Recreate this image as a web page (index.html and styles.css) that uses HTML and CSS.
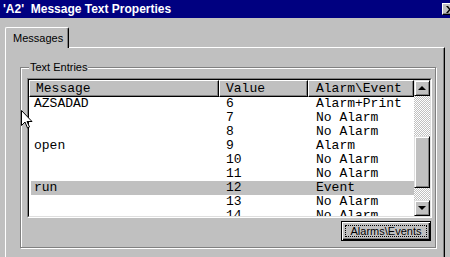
FILE: index.html
```html
<!DOCTYPE html>
<html lang="en">
<head>
    <meta charset="UTF-8">
    <title>'A2' Message Text Properties</title>
    <link rel="stylesheet" href="styles.css">
</head>
<body>
    <div class="titlebar">
        <span class="title">'A2'&nbsp; Message Text Properties</span>
        <span class="close">
            <svg width="8" height="7" viewBox="0 0 8 7"><path d="M0 0h2l2 2.5L6 0h2L5 3.5 8 7H6L4 4.5 2 7H0l3-3.5z" fill="#000"/></svg>
        </span>
    </div>

    <div class="tabs">
        <div class="tab">Messages</div>
    </div>

    <div class="panel">
        <div class="group">
            <span class="group-label">Text Entries</span>

            <div class="list">
                <div class="list-inner">
                    <div class="rows-area">
                        <div class="header">
                            <div class="hcell">Message</div>
                            <div class="hcell">Value</div>
                            <div class="hcell">Alarm\Event</div>
                        </div>
                        <div class="row"><span>AZSADAD</span><span>6</span><span>Alarm+Print</span></div>
                        <div class="row"><span></span><span>7</span><span>No Alarm</span></div>
                        <div class="row"><span></span><span>8</span><span>No Alarm</span></div>
                        <div class="row"><span>open</span><span>9</span><span>Alarm</span></div>
                        <div class="row"><span></span><span>10</span><span>No Alarm</span></div>
                        <div class="row"><span></span><span>11</span><span>No Alarm</span></div>
                        <div class="row selected"><span>run</span><span>12</span><span>Event</span></div>
                        <div class="row"><span></span><span>13</span><span>No Alarm</span></div>
                        <div class="row"><span></span><span>14</span><span>No Alarm</span></div>
                    </div>
                    <div class="scrollbar">
                        <div class="sb-btn"><span class="arrow-up"></span></div>
                        <div class="sb-track"><div class="sb-thumb"></div></div>
                        <div class="sb-btn"><span class="arrow-down"></span></div>
                    </div>
                </div>
            </div>

            <div class="btn-row">
                <button class="btn default"><span class="focus">Alarms\Events</span></button>
            </div>
        </div>
    </div>

    <!-- mouse pointer -->
    <svg class="cursor" width="13" height="20" viewBox="0 0 13 20">
        <path d="M0.5 0.5v15l3.5-3.5 2.5 6 2-1-2.5-5.5h5z" fill="#fff" stroke="#000" stroke-width="1"/>
    </svg>
</body>
</html>
```

FILE: styles.css
```css
body {
    margin: 0;
    width: 450px;
    height: 257px;
    overflow: hidden;
    position: relative;
    background: #c0c0c0;
    font-family: "Liberation Sans", Arial, sans-serif;
    font-size: 11px;
    color: #000;
}
.titlebar {
    height: 18px;
    background: #000080;
    color: #fff;
    display: flex;
    align-items: center;
    justify-content: space-between;
    padding-left: 3px;
    font-size: 12px;
    font-weight: bold;
}
.close {
    flex: none;
    width: 16px;
    height: 12px;
    margin-right: -8px;
    box-sizing: border-box;
    background: #c0c0c0;
    border-top: 1px solid #fff;
    border-left: 1px solid #fff;
    border-right: 1px solid #000;
    border-bottom: 1px solid #000;
    box-shadow: inset -1px -1px #808080;
    display: flex;
    align-items: center;
    padding-left: 3px;
}
.tabs {
    padding: 9px 0 0 5px;
    display: flex;
}
.tab {
    position: relative;
    z-index: 1;
    width: 64px;
    height: 21px;
    box-sizing: border-box;
    margin-bottom: -1px;
    padding: 4px 0 0 7px;
    background: #c0c0c0;
    border-top: 1px solid #fff;
    border-left: 1px solid #fff;
    border-right: 1px solid #000;
    border-radius: 2px 2px 0 0;
    box-shadow: inset -1px 0 #808080;
}
.panel {
    margin-left: 5px;
    width: 440px;
    height: 220px;
    box-sizing: border-box;
    border-top: 1px solid #fff;
    border-left: 1px solid #fff;
    border-right: 1px solid #000;
    box-shadow: inset -1px 0 #808080;
    padding: 19px 0 0 14px;
}
.group {
    position: relative;
    width: 416px;
    height: 181px;
    box-sizing: border-box;
    border: 1px solid #808080;
    box-shadow: 1px 1px 0 #fff, inset 1px 1px 0 #fff;
    padding: 10px 0 0 6px;
}
.group-label {
    position: absolute;
    top: -7px;
    left: 8px;
    padding: 0 1px;
    line-height: 13px;
    background: #c0c0c0;
}
.list {
    width: 405px;
    height: 140px;
    box-sizing: border-box;
    border-top: 1px solid #808080;
    border-left: 1px solid #808080;
    border-right: 1px solid #fff;
    border-bottom: 1px solid #fff;
}
.list-inner {
    height: 100%;
    box-sizing: border-box;
    display: flex;
    background: #fff;
    border-top: 1px solid #000;
    border-left: 1px solid #000;
    border-right: 1px solid #dfdfdf;
    border-bottom: 1px solid #dfdfdf;
}
.rows-area {
    flex: 1;
    overflow: hidden;
    font-family: "Liberation Mono", "Courier New", monospace;
    font-size: 13px;
}
.header, .row {
    display: grid;
    grid-template-columns: 190px 89px 106px;
}
.hcell {
    height: 17px;
    box-sizing: border-box;
    background: #c0c0c0;
    border-top: 1px solid #fff;
    border-left: 1px solid #fff;
    border-right: 1px solid #000;
    border-bottom: 1px solid #000;
    box-shadow: inset -1px -1px #808080;
    padding-left: 6px;
    line-height: 15px;
    white-space: nowrap;
}
.hcell:last-child {
    padding-left: 7px;
}
.row {
    height: 14px;
    line-height: 14px;
    white-space: nowrap;
}
.row span:nth-child(1) { padding-left: 5px; }
.row span:nth-child(2) { padding-left: 7px; }
.row span:nth-child(3) { padding-left: 8px; }
.row.selected {
    background: #c0c0c0;
    box-shadow: inset 2px 0 #fff;
}
.scrollbar {
    width: 16px;
    display: flex;
    flex-direction: column;
}
.sb-btn {
    width: 16px;
    height: 16px;
    box-sizing: border-box;
    background: #c0c0c0;
    border-top: 1px solid #dfdfdf;
    border-left: 1px solid #dfdfdf;
    border-right: 1px solid #000;
    border-bottom: 1px solid #000;
    box-shadow: inset 1px 1px #fff, inset -1px -1px #808080;
    display: flex;
    align-items: center;
    justify-content: center;
}
.arrow-up, .arrow-down {
    width: 0;
    height: 0;
    border-left: 4px solid transparent;
    border-right: 4px solid transparent;
}
.arrow-up { border-bottom: 4px solid #000; }
.arrow-down { border-top: 4px solid #000; }
.sb-track {
    flex: 1;
    background: repeating-conic-gradient(#c0c0c0 0 25%, #fff 0 50%) 0 0 / 2px 2px;
}
.sb-thumb {
    margin-top: 40px;
    height: 52px;
    box-sizing: border-box;
    background: #c0c0c0;
    border-top: 1px solid #dfdfdf;
    border-left: 1px solid #dfdfdf;
    border-right: 1px solid #000;
    border-bottom: 1px solid #000;
    box-shadow: inset 1px 1px #fff, inset -1px -1px #808080;
}
.btn-row {
    display: flex;
    justify-content: flex-end;
    margin-top: 3px;
    padding-right: 4px;
}
.btn {
    width: 90px;
    height: 20px;
    padding: 3px;
    margin: 0;
    font: inherit;
    background: #c0c0c0;
    border: 1px solid #000;
    box-shadow: inset 1px 1px #fff, inset -1px -1px #000, inset -2px -2px #808080;
    display: flex;
}
.focus {
    flex: 1;
    border: 1px dotted #000;
    line-height: 10px;
    text-align: center;
}
.cursor {
    position: absolute;
    left: 21px;
    top: 110px;
}
```
